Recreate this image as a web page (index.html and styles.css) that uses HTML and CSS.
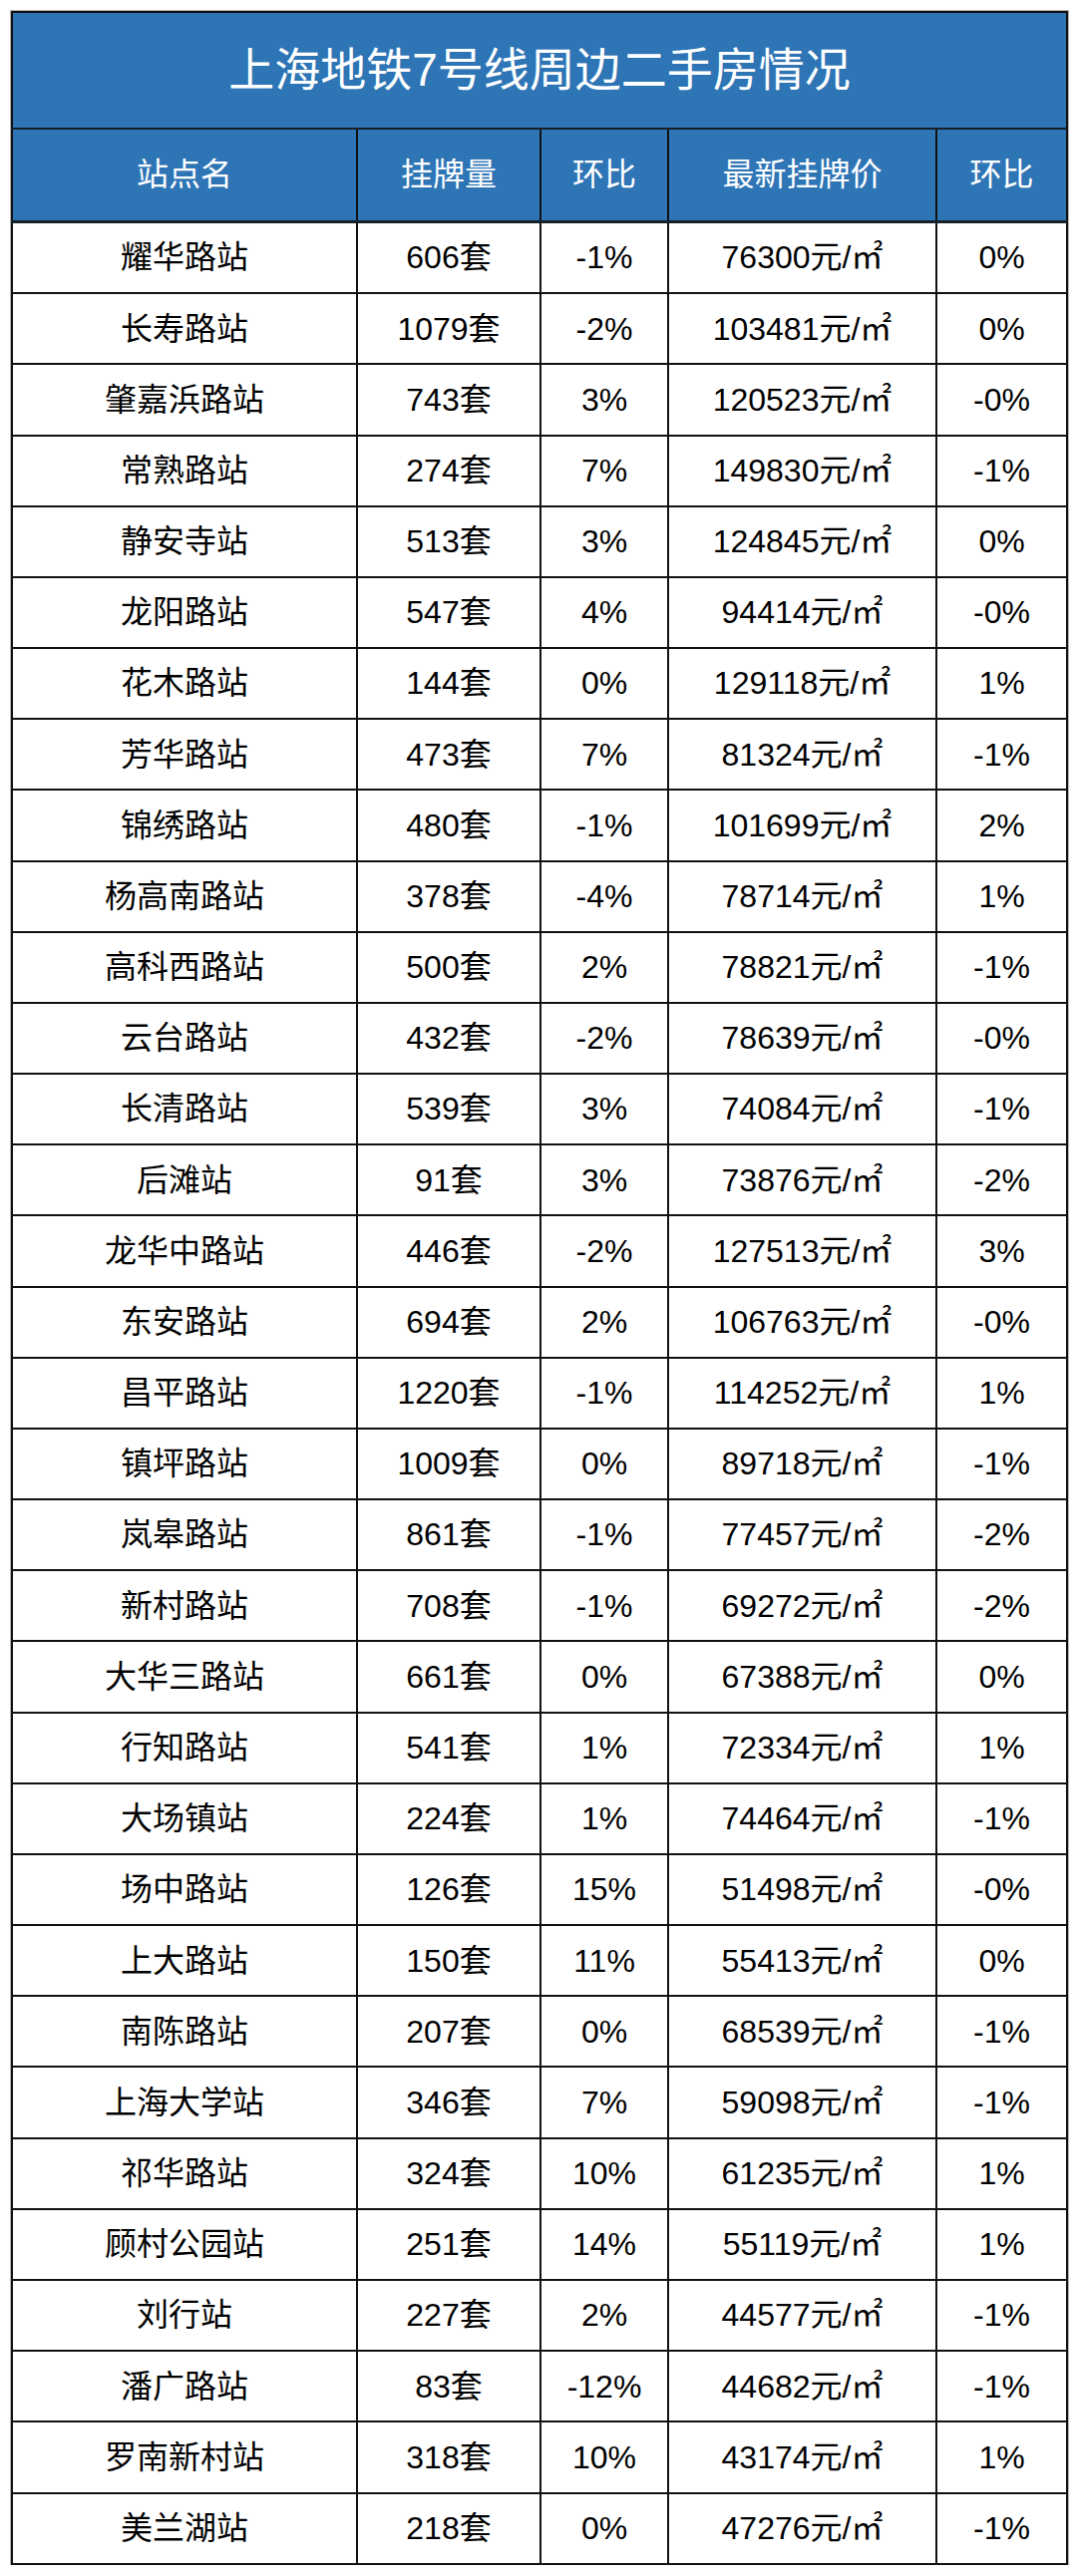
FILE: index.html
```html
<!DOCTYPE html>
<html lang="zh-CN">
<head>
<meta charset="utf-8">
<title>上海地铁7号线周边二手房情况</title>
<link rel="stylesheet" href="styles.css">
</head>
<body>
<div class="wrap">
<table class="sheet">
<colgroup>
<col class="c1"><col class="c2"><col class="c3"><col class="c4"><col class="c5">
</colgroup>
<thead>
<tr class="title-row"><th colspan="5">上海地铁7号线周边二手房情况</th></tr>
<tr class="head-row"><th>站点名</th><th>挂牌量</th><th>环比</th><th>最新挂牌价</th><th>环比</th></tr>
</thead>
<tbody>
<tr><td>耀华路站</td><td>606套</td><td>-1%</td><td>76300元/㎡</td><td>0%</td></tr>
<tr><td>长寿路站</td><td>1079套</td><td>-2%</td><td>103481元/㎡</td><td>0%</td></tr>
<tr><td>肇嘉浜路站</td><td>743套</td><td>3%</td><td>120523元/㎡</td><td>-0%</td></tr>
<tr><td>常熟路站</td><td>274套</td><td>7%</td><td>149830元/㎡</td><td>-1%</td></tr>
<tr><td>静安寺站</td><td>513套</td><td>3%</td><td>124845元/㎡</td><td>0%</td></tr>
<tr><td>龙阳路站</td><td>547套</td><td>4%</td><td>94414元/㎡</td><td>-0%</td></tr>
<tr><td>花木路站</td><td>144套</td><td>0%</td><td>129118元/㎡</td><td>1%</td></tr>
<tr><td>芳华路站</td><td>473套</td><td>7%</td><td>81324元/㎡</td><td>-1%</td></tr>
<tr><td>锦绣路站</td><td>480套</td><td>-1%</td><td>101699元/㎡</td><td>2%</td></tr>
<tr><td>杨高南路站</td><td>378套</td><td>-4%</td><td>78714元/㎡</td><td>1%</td></tr>
<tr><td>高科西路站</td><td>500套</td><td>2%</td><td>78821元/㎡</td><td>-1%</td></tr>
<tr><td>云台路站</td><td>432套</td><td>-2%</td><td>78639元/㎡</td><td>-0%</td></tr>
<tr><td>长清路站</td><td>539套</td><td>3%</td><td>74084元/㎡</td><td>-1%</td></tr>
<tr><td>后滩站</td><td>91套</td><td>3%</td><td>73876元/㎡</td><td>-2%</td></tr>
<tr><td>龙华中路站</td><td>446套</td><td>-2%</td><td>127513元/㎡</td><td>3%</td></tr>
<tr><td>东安路站</td><td>694套</td><td>2%</td><td>106763元/㎡</td><td>-0%</td></tr>
<tr><td>昌平路站</td><td>1220套</td><td>-1%</td><td>114252元/㎡</td><td>1%</td></tr>
<tr><td>镇坪路站</td><td>1009套</td><td>0%</td><td>89718元/㎡</td><td>-1%</td></tr>
<tr><td>岚皋路站</td><td>861套</td><td>-1%</td><td>77457元/㎡</td><td>-2%</td></tr>
<tr><td>新村路站</td><td>708套</td><td>-1%</td><td>69272元/㎡</td><td>-2%</td></tr>
<tr><td>大华三路站</td><td>661套</td><td>0%</td><td>67388元/㎡</td><td>0%</td></tr>
<tr><td>行知路站</td><td>541套</td><td>1%</td><td>72334元/㎡</td><td>1%</td></tr>
<tr><td>大场镇站</td><td>224套</td><td>1%</td><td>74464元/㎡</td><td>-1%</td></tr>
<tr><td>场中路站</td><td>126套</td><td>15%</td><td>51498元/㎡</td><td>-0%</td></tr>
<tr><td>上大路站</td><td>150套</td><td>11%</td><td>55413元/㎡</td><td>0%</td></tr>
<tr><td>南陈路站</td><td>207套</td><td>0%</td><td>68539元/㎡</td><td>-1%</td></tr>
<tr><td>上海大学站</td><td>346套</td><td>7%</td><td>59098元/㎡</td><td>-1%</td></tr>
<tr><td>祁华路站</td><td>324套</td><td>10%</td><td>61235元/㎡</td><td>1%</td></tr>
<tr><td>顾村公园站</td><td>251套</td><td>14%</td><td>55119元/㎡</td><td>1%</td></tr>
<tr><td>刘行站</td><td>227套</td><td>2%</td><td>44577元/㎡</td><td>-1%</td></tr>
<tr><td>潘广路站</td><td>83套</td><td>-12%</td><td>44682元/㎡</td><td>-1%</td></tr>
<tr><td>罗南新村站</td><td>318套</td><td>10%</td><td>43174元/㎡</td><td>1%</td></tr>
<tr><td>美兰湖站</td><td>218套</td><td>0%</td><td>47276元/㎡</td><td>-1%</td></tr>
</tbody>
</table>
</div>
</body>
</html>
```

FILE: styles.css
```css
html, body {
  margin: 0;
  padding: 0;
  background: #ffffff;
}

.wrap {
  padding: 11px 0 0 11px;
}

.sheet {
  border-collapse: collapse;
  table-layout: fixed;
  width: 1058px;
  border: 2px solid #111;
  outline: 1px solid #b5b5b5;
  font-family: "Liberation Sans", "Noto Sans CJK SC", sans-serif;
  font-size: 32px;
  color: #000;
}

.c1 { width: 346px; }
.c2 { width: 184px; }
.c3 { width: 128px; }
.c4 { width: 269px; }
.c5 { width: 131px; }

.sheet th,
.sheet td {
  border: 2px solid #111;
  padding: 0;
  text-align: center;
  vertical-align: middle;
  font-weight: 400;
  white-space: nowrap;
  overflow: hidden;
  line-height: 1.2;
}

.sheet thead th {
  background: #2e75b6;
  color: #ffffff;
}

.title-row th {
  height: 115px;
  font-size: 46px;
  border-bottom-color: #15202b;
}

.head-row th {
  height: 91px;
  font-size: 32px;
  border-bottom: 3px solid #15202b;
}

.sheet tbody td {
  height: 69.18px;
}
```
